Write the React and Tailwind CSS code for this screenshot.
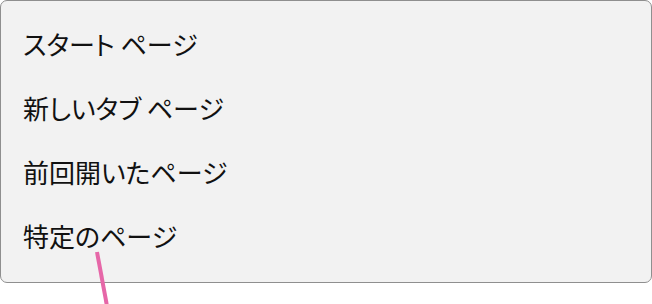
import React from 'react';

const items = ['スタート ページ', '新しいタブ ページ', '前回開いたページ', '特定のページ'];

export default function App() {
  return (
    <div
      className="relative w-[652px] h-[304px] bg-white"
      style={{ fontFamily: '"Noto Sans CJK JP", "Noto Sans", sans-serif' }}
    >
      <div className="w-[652px] h-[283px] bg-[#f2f2f2] border border-[#8f8f8f] rounded-[7px] pt-[11px] pl-[22px]">
        {items.map((label) => (
          <div
            key={label}
            className="h-16 flex items-center text-[26px] text-[#111] leading-none [font-feature-settings:'palt']"
          >
            {label}
          </div>
        ))}
      </div>
      {/* pointer line */}
      <svg className="absolute left-0 top-0" width="652" height="304">
        <line x1="97" y1="252" x2="107" y2="306" stroke="#e667a8" strokeWidth="4" />
      </svg>
    </div>
  );
}
